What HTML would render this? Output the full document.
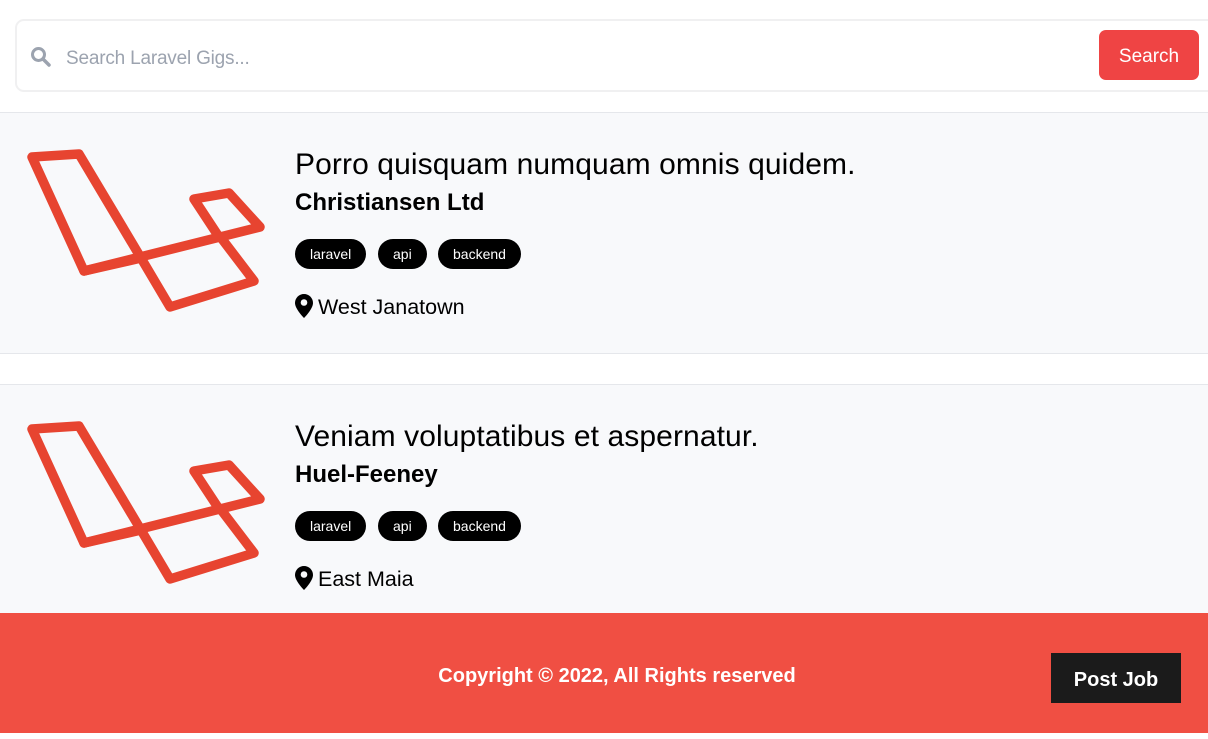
<!DOCTYPE html>
<html><head><meta charset="utf-8">
<style>
*{margin:0;padding:0;box-sizing:border-box}
body{width:1208px;height:739px;overflow:hidden;background:#fff;font-family:"Liberation Sans",sans-serif;position:relative}
.abs{position:absolute}
.search{left:15px;top:19px;width:1210px;height:73px;border:2px solid #f0f0f1;border-radius:9px;background:#fff}
.ph{left:66px;top:48px;font-size:19px;color:#9ca3af;letter-spacing:-0.2px}
.btn{left:1099px;top:30px;width:100px;height:50px;background:#ef4444;border-radius:7px;color:#fff;font-size:19px;text-align:center;line-height:54px}
.card{left:0;width:1208px;background:#f8f9fb;border-top:1px solid #e5e7eb}
.title{font-size:30px;color:#000;left:295px;letter-spacing:0.1px}
.comp{font-size:24px;font-weight:bold;color:#000;left:295px}
.tag{background:#000;color:#fff;font-size:14px;height:30px;line-height:30px;border-radius:15px;padding:0 15px}
.loc{font-size:21.5px;color:#000;left:295px}
.footer{left:0;top:613px;width:1208px;height:120px;background:#f04f43}
.copy{left:0;width:1234px;text-align:center;top:665px;color:#fff;font-weight:bold;font-size:20px}
.post{left:1051px;top:653px;width:130px;height:50px;background:#1b1b1b;color:#fff;font-weight:bold;font-size:20px;text-align:center;line-height:54px}
</style></head><body>
<div class="abs search"></div>
<svg class="abs" style="left:30px;top:46px" width="22" height="22" viewBox="0 0 22 22"><circle cx="8.5" cy="8.5" r="6" fill="none" stroke="#9ca3af" stroke-width="3"/><line x1="13" y1="13" x2="19" y2="19" stroke="#9ca3af" stroke-width="3.5" stroke-linecap="round"/></svg>
<div class="abs ph">Search Laravel Gigs...</div>
<div class="abs btn">Search</div>
<div class="abs" style="left:0;top:112px;width:1208px;height:1px;background:#e5e7eb"></div>

<div class="abs card" style="top:112px;height:242px;border-bottom:1px solid #e5e7eb"></div>
<div class="abs card" style="top:384px;height:229px"></div>

<svg class="abs" style="left:0;top:0" width="300" height="739" viewBox="0 0 300 739">
<g fill="none" stroke="#e74430" stroke-width="9.5" stroke-linejoin="round" stroke-linecap="round">
<polygon points="32,157 79,154 141,258 84,271"/>
<polyline points="84,271 260,227 229,193 194,199 219,237"/>
<polyline points="141,258 170,307 254,281 222,239"/>
</g>
<g transform="translate(0,272)" fill="none" stroke="#e74430" stroke-width="9.5" stroke-linejoin="round" stroke-linecap="round">
<polygon points="32,157 79,154 141,258 84,271"/>
<polyline points="84,271 260,227 229,193 194,199 219,237"/>
<polyline points="141,258 170,307 254,281 222,239"/>
</g>
</svg>

<div class="abs title" style="top:148px">Porro quisquam numquam omnis quidem.</div>
<div class="abs comp" style="top:189px">Christiansen Ltd</div>
<div class="abs tag" style="left:295px;top:239px">laravel</div>
<div class="abs tag" style="left:378px;top:239px">api</div>
<div class="abs tag" style="left:438px;top:239px">backend</div>
<svg class="abs" style="left:295px;top:294px" width="18" height="24" viewBox="0 0 18 24"><path d="M9 0C4 0 0 4 0 9c0 6 9 15 9 15s9-9 9-15c0-5-4-9-9-9z" fill="#000"/><circle cx="9" cy="8.5" r="3.3" fill="#f8f9fb"/></svg>
<div class="abs loc" style="top:295px;left:318px">West Janatown</div>

<div class="abs title" style="top:420px">Veniam voluptatibus et aspernatur.</div>
<div class="abs comp" style="top:461px">Huel-Feeney</div>
<div class="abs tag" style="left:295px;top:511px">laravel</div>
<div class="abs tag" style="left:378px;top:511px">api</div>
<div class="abs tag" style="left:438px;top:511px">backend</div>
<svg class="abs" style="left:295px;top:566px" width="18" height="24" viewBox="0 0 18 24"><path d="M9 0C4 0 0 4 0 9c0 6 9 15 9 15s9-9 9-15c0-5-4-9-9-9z" fill="#000"/><circle cx="9" cy="8.5" r="3.3" fill="#f8f9fb"/></svg>
<div class="abs loc" style="top:567px;left:318px">East Maia</div>

<div class="abs footer"></div>
<div class="abs copy">Copyright © 2022, All Rights reserved</div>
<div class="abs post">Post Job</div>
</body></html>
